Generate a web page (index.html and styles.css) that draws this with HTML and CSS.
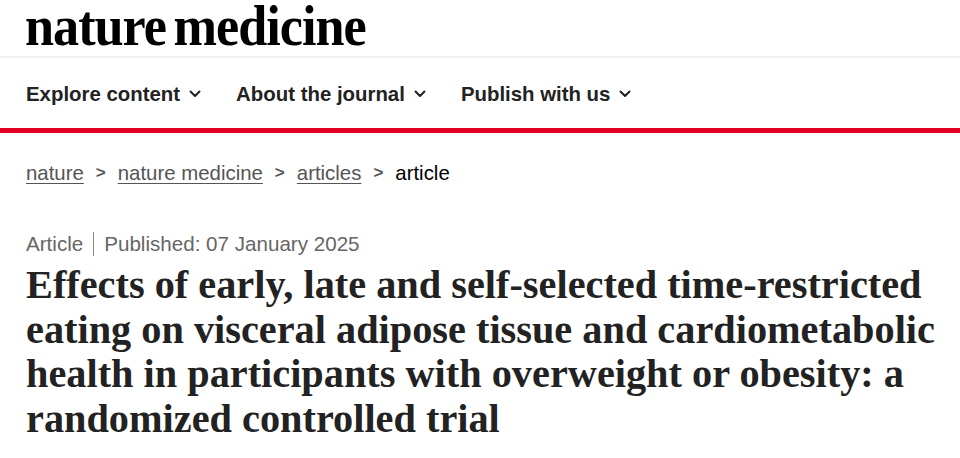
FILE: index.html
```html
<!DOCTYPE html>
<html lang="en">
<head>
<meta charset="utf-8">
<title>nature medicine</title>
<link rel="stylesheet" href="styles.css">
</head>
<body>
<header class="masthead">
  <div class="logo">nature medicine</div>
</header>
<nav class="mainnav">
  <ul class="navlist">
    <li class="navitem">Explore content <svg class="chev" viewBox="0 0 12 8" width="12" height="8"><path d="M1.5 1.5 6 6l4.5-4.5" fill="none" stroke="#222" stroke-width="2" stroke-linecap="round" stroke-linejoin="round"/></svg></li>
    <li class="navitem">About the journal <svg class="chev" viewBox="0 0 12 8" width="12" height="8"><path d="M1.5 1.5 6 6l4.5-4.5" fill="none" stroke="#222" stroke-width="2" stroke-linecap="round" stroke-linejoin="round"/></svg></li>
    <li class="navitem">Publish with us <svg class="chev" viewBox="0 0 12 8" width="12" height="8"><path d="M1.5 1.5 6 6l4.5-4.5" fill="none" stroke="#222" stroke-width="2" stroke-linecap="round" stroke-linejoin="round"/></svg></li>
  </ul>
</nav>
<main class="content">
  <ol class="crumbs">
    <li class="crumb"><a class="crumb-link" href="#">nature</a></li>
    <li class="sep">&gt;</li>
    <li class="crumb"><a class="crumb-link" href="#">nature medicine</a></li>
    <li class="sep">&gt;</li>
    <li class="crumb"><a class="crumb-link" href="#">articles</a></li>
    <li class="sep">&gt;</li>
    <li class="crumb current">article</li>
  </ol>
  <div class="meta">
    <span class="meta-type">Article</span>
    <span class="meta-date">Published: 07 January 2025</span>
  </div>
  <h1 class="title">Effects of early, late and self-selected time-restricted<br>eating on visceral adipose tissue and cardiometabolic<br>health in participants with overweight or obesity: a<br>randomized controlled trial</h1>
</main>
</body>
</html>
```
FILE: styles.css
```css
html, body {
  margin: 0;
  padding: 0;
  background: #fff;
}
body {
  font-family: "Liberation Sans", Arial, sans-serif;
  color: #222;
  overflow: hidden;
}
.masthead {
  height: 58px;
  border-bottom: 2px solid #f0f0f0;
  padding-left: 25px;
  box-sizing: border-box;
}
.logo {
  display: inline-block;
  font-family: "Liberation Serif", "Times New Roman", serif;
  font-weight: bold;
  font-size: 58px;
  letter-spacing: -1.1px;
  word-spacing: -5px;
  line-height: normal;
  margin-top: -8px;
  color: #000;
  transform: scaleX(0.9);
  transform-origin: left center;
}
.mainnav {
  height: 75px;
  border-bottom: 5px solid #e1001f;
  box-sizing: border-box;
  padding-left: 26px;
}
.navlist {
  list-style: none;
  margin: 0;
  padding: 0;
  display: flex;
  gap: 35px;
  height: 70px;
  align-items: center;
}
.navitem {
  font-size: 20.4px;
  font-weight: bold;
  color: #222;
  display: flex;
  align-items: center;
  gap: 9px;
  padding-top: 2px;
}
.chev {
  display: block;
}
.content {
  padding-left: 26px;
}
.crumbs {
  list-style: none;
  margin: 0;
  padding: 28px 0 0;
  display: flex;
  gap: 12px;
  font-size: 20.4px;
  line-height: 24px;
  color: #555;
}
.crumb-link {
  color: #555;
  text-decoration: underline;
  text-underline-offset: 3px;
  text-decoration-thickness: 1px;
}
.current {
  color: #000;
}
.sep {
  color: #555;
  font-weight: bold;
  font-size: 17px;
}
.meta {
  margin-top: 47px;
  font-size: 20.6px;
  line-height: 24px;
  color: #666;
  display: flex;
}
.meta-type {
  border-right: 1px solid #888;
  padding-right: 10px;
  margin-right: 10px;
}
.title {
  margin: 7px 0 0;
  font-family: "Liberation Serif", "Times New Roman", serif;
  font-weight: bold;
  font-size: 40.3px;
  line-height: 44.5px;
  color: #222;
  white-space: nowrap;
}
```
